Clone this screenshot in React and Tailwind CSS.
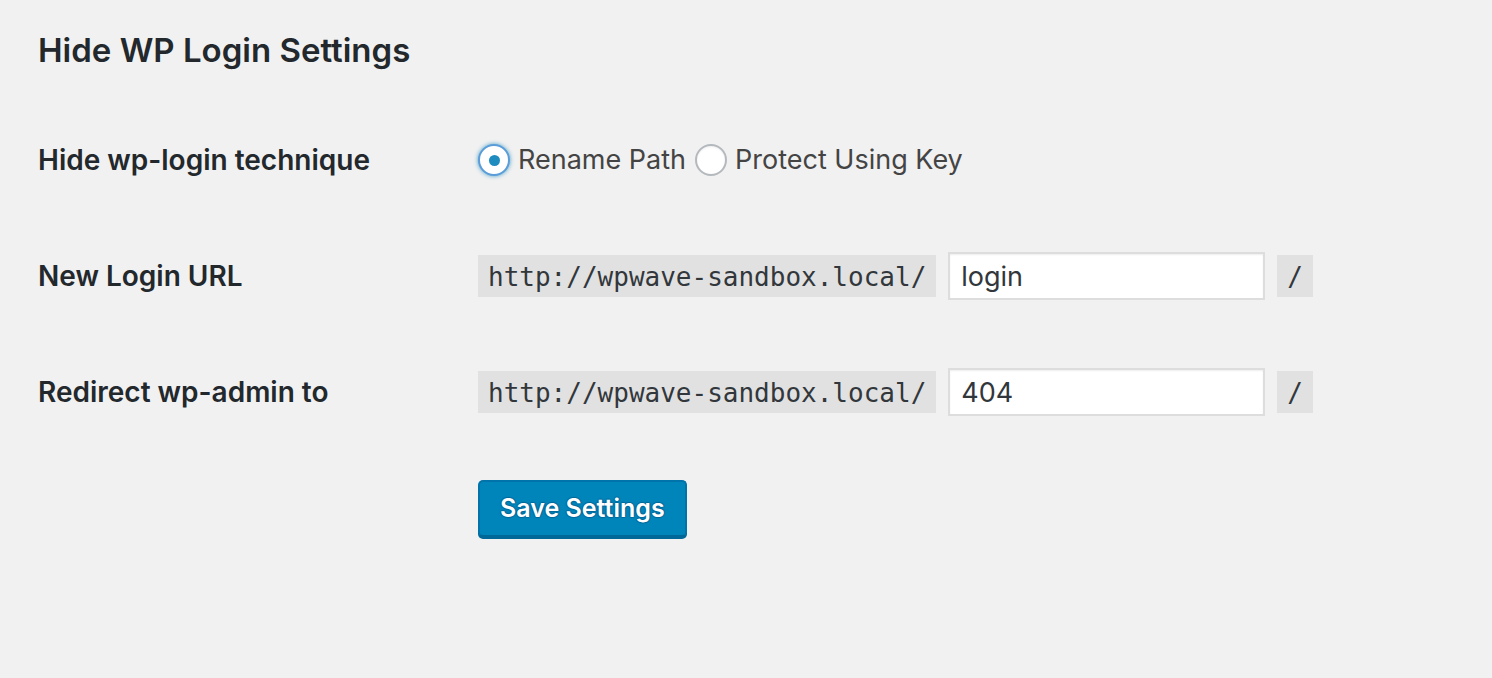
import React, { useState } from 'react';

const sans = { fontFamily: 'Inter, "Open Sans", sans-serif' };

function Radio({ checked, label, onClick }) {
  return (
    <label className="flex items-center cursor-pointer" onClick={onClick}>
      <span
        className={`flex items-center justify-center w-[32px] h-[32px] rounded-full bg-white border-2 ${
          checked
            ? 'border-[#5b9dd9] shadow-[0_0_4px_rgba(30,140,190,0.8)]'
            : 'border-[#b4b9be] shadow-[inset_0_1px_2px_rgba(0,0,0,0.07)]'
        }`}
      >
        {checked && <span className="w-[11px] h-[11px] rounded-full bg-[#1e8cbe]" />}
      </span>
      <span className="ml-[8px] mr-[9px] text-[27px] text-[#444]">{label}</span>
    </label>
  );
}

function UrlRow({ label, value }) {
  return (
    <div className="grid grid-cols-[440px_1fr] h-[116px] items-center">
      <div className="text-[28px] font-semibold text-[#23282d]">{label}</div>
      <div className="flex items-center">
        <code className="font-['DejaVu_Sans_Mono',monospace] text-[26px] leading-[32px] text-[#32373c] bg-[#e1e1e1] px-[10px] pt-[6px] pb-[4px]">
          http://wpwave-sandbox.local/
        </code>
        <input
          defaultValue={value}
          className="ml-[12px] w-[317px] h-[48px] bg-white border-2 border-[#ddd] shadow-[inset_0_1px_2px_rgba(0,0,0,0.07)] px-[11px] text-[27px] text-[#32373c] outline-none"
          style={sans}
        />
        <code className="ml-[12px] font-['DejaVu_Sans_Mono',monospace] text-[26px] leading-[32px] text-[#32373c] bg-[#e1e1e1] px-[10px] pt-[6px] pb-[4px]">
          /
        </code>
      </div>
    </div>
  );
}

export default function App() {
  const [mode, setMode] = useState('rename');

  return (
    <div className="min-h-[678px] bg-[#f1f1f1] pl-[38px] pt-[30px]" style={sans}>
      <h1 className="text-[33px] leading-[40px] font-semibold text-[#23282d]">Hide WP Login Settings</h1>

      <div className="mt-[32px]">
        <div className="grid grid-cols-[440px_1fr] h-[116px] items-center">
          <div className="text-[28px] font-semibold text-[#23282d]">Hide wp-login technique</div>
          <div className="flex items-center">
            <Radio checked={mode === 'rename'} label="Rename Path" onClick={() => setMode('rename')} />
            <Radio checked={mode === 'key'} label="Protect Using Key" onClick={() => setMode('key')} />
          </div>
        </div>
        <UrlRow label="New Login URL" value="login" />
        <UrlRow label="Redirect wp-admin to" value="404" />
      </div>

      <div className="pl-[440px] mt-[30px]">
        <button className="h-[57px] px-[20px] rounded-[5px] bg-[#0085ba] border-2 border-[#0073aa] border-b-[#006799] shadow-[0_2px_0_#006799] text-white text-[25px] font-semibold [text-shadow:0_-1px_1px_#006799,1px_0_1px_#006799,0_1px_1px_#006799,-1px_0_1px_#006799]">
          Save Settings
        </button>
      </div>
    </div>
  );
}
